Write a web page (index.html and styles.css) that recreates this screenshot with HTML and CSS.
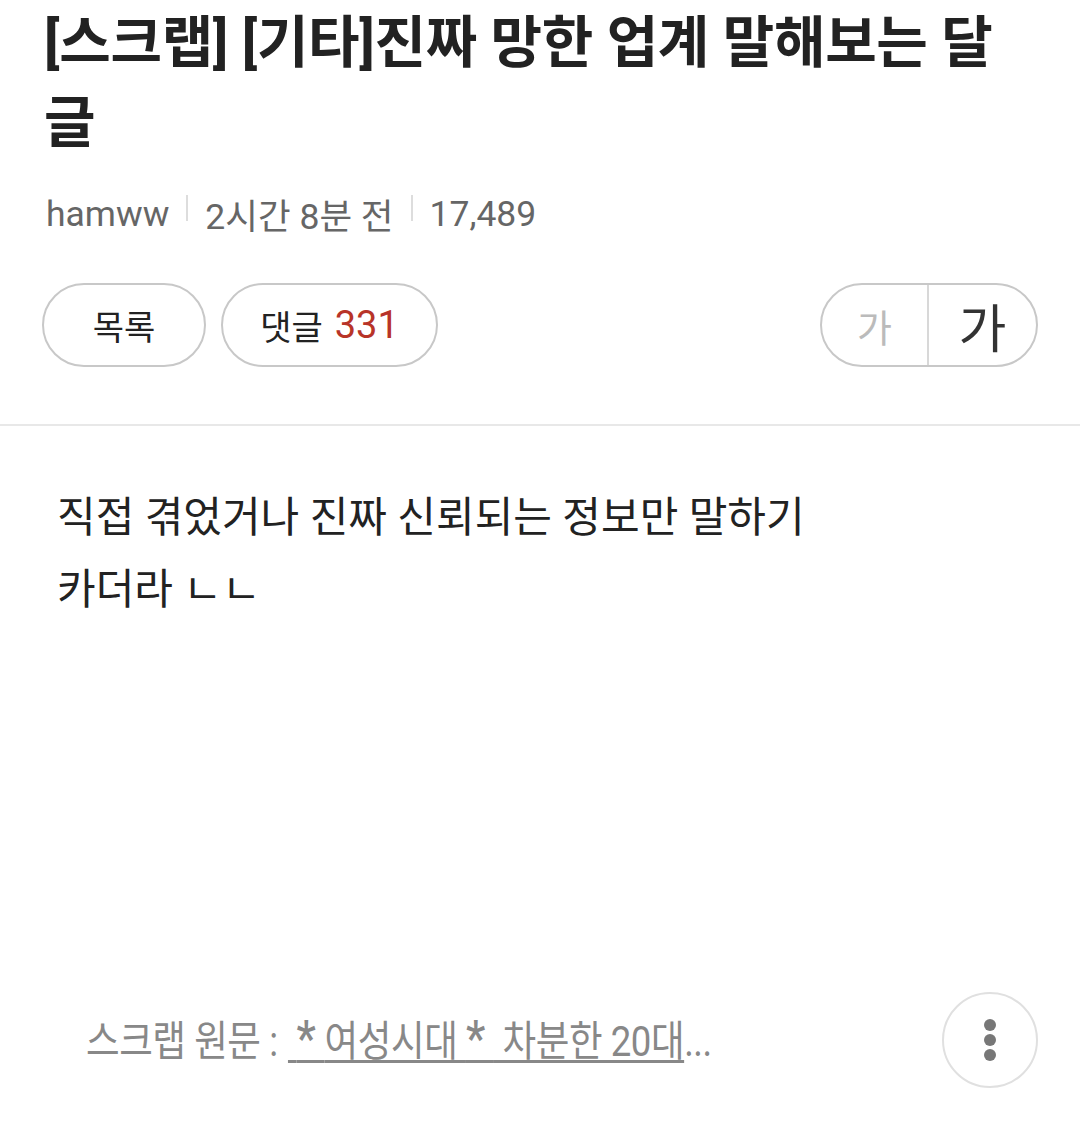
FILE: index.html
```html
<!DOCTYPE html>
<html lang="ko">
<head>
  <meta charset="UTF-8" />
  <meta name="viewport" content="width=device-width, initial-scale=1" />
  <title>[스크랩] [기타]진짜 망한 업계 말해보는 달글</title>
  <link rel="stylesheet" href="styles.css">
</head>
<body>

  <header class="post-head">
    <h1 class="post-title">[스크랩] [기타]진짜 망한 업계 말해보는 달글</h1>
    <div class="post-meta">
      <span>hamww</span>
      <span class="sep"></span>
      <span>2시간 8분 전</span>
      <span class="sep"></span>
      <span>17,489</span>
    </div>
    <div class="post-tools">
      <a href="#" class="pill pill-list">목록</a>
      <a href="#" class="pill pill-comments">댓글 <em>331</em></a>
      <div class="font-size">
        <button type="button" class="fs-small">가</button>
        <button type="button" class="fs-large">가</button>
      </div>
    </div>
  </header>

  <main class="post-body">
    <p>직접 겪었거나 진짜 신뢰되는 정보만 말하기<br>카더라 ㄴㄴ</p>
  </main>

  <footer class="post-foot">
    <p class="scrap-src"><span class="squeeze">스크랩 원문 : <a href="#">&nbsp;<span class="star">*</span>여성시대&nbsp;<span class="star">*</span> 차분한 20대</a>...</span></p>
    <button type="button" class="more" aria-label="더보기">
      <svg width="14" height="44" viewBox="0 0 14 44"><circle cx="7" cy="7" r="6"/><circle cx="7" cy="22" r="6"/><circle cx="7" cy="37" r="6"/></svg>
    </button>
  </footer>

</body>
</html>
```

FILE: styles.css
```css
/* Reset & Base */
* { box-sizing: border-box; margin: 0; padding: 0; }
body {
  font-family: Roboto, "Noto Sans CJK KR", sans-serif;
  background: #fff; color: #222;
  width: 1080px; min-height: 1130px;
  display: flex; flex-direction: column;
}
a { color: inherit; text-decoration: none; }
button { font-family: inherit; background: none; border: none; cursor: pointer; }

/* Header */
.post-head {
  padding: 3px 44px 0 44px;
  border-bottom: 2px solid #e8e8e8;
}
.post-title {
  font-size: 56px;
  line-height: 80px;
  font-weight: 700;
  color: #222;
  letter-spacing: -0.3px;
}
.post-meta {
  display: flex;
  align-items: center;
  margin-top: 25px;
  padding-left: 2px;
  font-size: 35.5px;
  color: #666;
}
.post-meta .sep {
  width: 2px; height: 26px;
  background: #ddd;
  margin: 0 17px;
  position: relative; top: -6px;
}
.post-tools {
  display: flex;
  align-items: center;
  gap: 15px;
  margin-top: 44px;
  margin-bottom: 57px;
  margin-right: -2px;
  margin-left: -2px;
}
.pill {
  height: 84px;
  border: 2px solid #c8c8c8;
  border-radius: 42px;
  display: flex; align-items: center; justify-content: center;
  font-size: 34px;
  color: #222;
}
.pill-list { width: 164px; }
.pill-comments { width: 217px; gap: 12px; }
.pill-comments em { font-style: normal; color: #b83428; font-size: 38px; }

.font-size {
  margin-left: auto;
  display: flex;
  height: 84px;
  border: 2px solid #c8c8c8;
  border-radius: 42px;
  overflow: hidden;
}
.font-size button {
  width: 107px;
  font-family: "Noto Sans CJK KR", sans-serif;
}
.fs-small { font-size: 38px; color: #bbb; border-right: 2px solid #d8d8d8 !important; }
.fs-large { font-size: 52px; color: #333; }

/* Body */
.post-body {
  flex: 1;
  padding: 56px 57px 0 57px;
}
.post-body p {
  font-size: 42px;
  line-height: 72px;
  color: #222;
}

/* Footer */
.post-foot {
  display: flex;
  align-items: center;
  justify-content: space-between;
  padding: 0 42px 42px 86px;
}
.scrap-src {
  font-size: 42px;
  line-height: 56px;
  color: #888;
  white-space: nowrap;
  width: 640px;
}
.squeeze {
  display: inline-block;
  transform: scaleX(0.87);
  transform-origin: left center;
  letter-spacing: -0.5px;
}
.scrap-src a {
  margin-left: 2px;
  text-decoration: underline;
  text-decoration-thickness: 3px;
  text-underline-offset: 4px;
}
.star {
  font-family: Roboto, sans-serif;
  font-size: 50px;
  font-weight: 500;
  letter-spacing: 10px;
}
.more {
  width: 96px; height: 96px;
  border: 2px solid #e0e0e0;
  border-radius: 50%;
  display: flex; align-items: center; justify-content: center;
}
.more svg { fill: #777; }
```
